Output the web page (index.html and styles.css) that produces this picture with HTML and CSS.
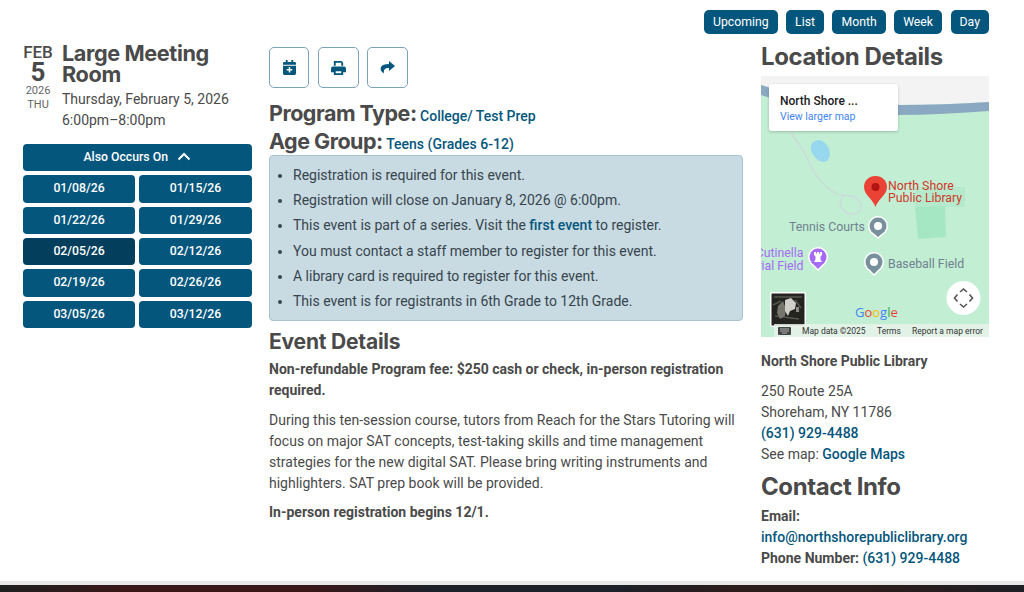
FILE: index.html
```html
<!DOCTYPE html>
<html lang="en">
<head>
<meta charset="utf-8">
<title>Large Meeting Room</title>
<link rel="stylesheet" href="styles.css">
</head>
<body>
<div class="page">
  <nav class="views">
    <a class="btn">Upcoming</a><a class="btn">List</a><a class="btn">Month</a><a class="btn">Week</a><a class="btn">Day</a>
  </nav>
  <div class="columns">
    <aside class="left">
      <div class="event-head">
        <div class="date">
          <div class="mon">FEB</div>
          <div class="day">5</div>
          <div class="yr">2026</div>
          <div class="dow">THU</div>
        </div>
        <div class="title">
          <h1>Large Meeting Room</h1>
          <div class="when">Thursday, February 5, 2026</div>
          <div class="when">6:00pm–8:00pm</div>
        </div>
      </div>
      <div class="occ">
        <a class="occ-btn wide">Also Occurs On
          <svg class="chev" viewBox="0 0 14 9" width="14" height="9"><path d="M1.500 7.500 7 2l5.500 5.500" fill="none" stroke="#fff" stroke-width="2"/></svg>
        </a>
        <a class="occ-btn">01/08/26</a><a class="occ-btn">01/15/26</a>
        <a class="occ-btn">01/22/26</a><a class="occ-btn">01/29/26</a>
        <a class="occ-btn current">02/05/26</a><a class="occ-btn">02/12/26</a>
        <a class="occ-btn">02/19/26</a><a class="occ-btn">02/26/26</a>
        <a class="occ-btn">03/05/26</a><a class="occ-btn">03/12/26</a>
      </div>
    </aside>
    <main class="mid">
      <div class="tools">
        <a class="tool tool-narrow"><svg viewBox="0 0 14 16" width="13" height="15"><path fill="#04567c" d="M3 0h2v2h4V0h2v2h1.500A1.500 1.500 0 0 1 14 3.500V5H0V3.500A1.500 1.500 0 0 1 1.500 2H3zM0 6h14v8.500a1.500 1.500 0 0 1-1.500 1.500h-11A1.500 1.500 0 0 1 0 14.500z"/><path fill="#fff" d="M6.200 7.500h1.600v2.200H10v1.600H7.800v2.200H6.200v-2.200H4V9.700h2.200z"/></svg></a>
        <a class="tool"><svg viewBox="0 0 16 15" width="15" height="14"><path fill="#04567c" d="M3 0h8.200L13 1.800V5h-2V2H5v3H3zM2 6h12a2 2 0 0 1 2 2v4h-3v3H3v-3H0V8a2 2 0 0 1 2-2zm3 5v2h6v-2z"/></svg></a>
        <a class="tool"><svg viewBox="0 0 15 13" width="15" height="13"><path fill="#04567c" d="M9 0l6 5-6 5V7C5.500 7 3.500 8 3.800 12.500 1 10.500 0 8.500 1 6c.9-2 4-3 8-3z"/></svg></a>
      </div>
      <div class="meta"><span class="meta-k">Program Type:</span> <a class="meta-v">College/ Test Prep</a></div>
      <div class="meta"><span class="meta-k">Age Group:</span> <a class="meta-v">Teens (Grades 6-12)</a></div>
      <ul class="notes">
        <li>Registration is required for this event.</li>
        <li>Registration will close on January 8, 2026 @ 6:00pm.</li>
        <li>This event is part of a series. Visit the <a class="link">first event</a> to register.</li>
        <li>You must contact a staff member to register for this event.</li>
        <li>A library card is required to register for this event.</li>
        <li>This event is for registrants in 6th Grade to 12th Grade.</li>
      </ul>
      <h2 class="details-h">Event Details</h2>
      <p class="para"><strong>Non-refundable Program fee: $250 cash or check, in-person registration required.</strong></p>
      <p class="para">During this ten-session course, tutors from Reach for the Stars Tutoring will focus on major SAT concepts, test-taking skills and time management strategies for the new digital SAT. Please bring writing instruments and highlighters. SAT prep book will be provided.</p>
      <p class="para"><strong>In-person registration begins 12/1.</strong></p>
    </main>
    <aside class="right">
      <h2 class="loc-h">Location Details</h2>
      <div class="map">
        <svg class="map-svg" viewBox="0 0 228 261" width="228" height="261">
          <rect width="228" height="261" fill="#c2eed3"/>
          <path d="M0 0h228v26c-30 2-60 3-92 3C90 29 35 22 0 9z" fill="#f3f3f3"/>
          <path d="M0 9C35 22 90 29 136 29c32 0 62-1 92-3v9c-30 2-60 4-92 4C90 39 35 32 0 19z" fill="#8ba8c2"/>
          <path d="M30 57c5 6 9 12 13 19 4 8 6 14 10 20 6 9 13 17 23 22 6 2 10 1 14 2 5 1 8 4 10 8 2 6-4 11-10 10-6-1-11-6-11-11 0-3 2-5 4-7" fill="none" stroke="#cdd8dc" stroke-width="1.300"/>
          <path d="M54 65c5-3 11 1 14 8 2 7 0 12-5 13-6 0-11-6-13-12-1-4 1-8 4-9z" fill="#97d8ee"/>
          <path d="M154 111h50v20h-20v1h-30z" fill="#b4eacb"/>
          <path d="M154 131l30-1 1 31-28 2z" fill="#a6e7c3"/>
          <path d="M114.500 100c8 0 11.500 6 11.500 11 0 8-9 12-11.500 20-2.500-8-11.500-12-11.500-20 0-5 3.500-11 11.500-11z" fill="#ea4335"/>
          <circle cx="114.500" cy="111" r="4" fill="#b31412"/>
          <text class="m-red" x="127" y="114">North Shore</text>
          <text class="m-red" x="127" y="126">Public Library</text>
          <circle cx="117" cy="150" r="10" fill="#fff"/><path d="M109 156l8 7 8-7z" fill="#fff"/>
          <circle cx="117" cy="150" r="8.500" fill="#78909c"/><path d="M110 155l7 6 7-6z" fill="#78909c"/><circle cx="117" cy="150" r="4" fill="#fff"/>
          <text class="m-gray" x="28" y="155">Tennis Courts</text>
          <circle cx="57" cy="181" r="10" fill="#fff"/><path d="M49 187l8 8 8-8z" fill="#fff"/>
          <circle cx="57" cy="181" r="8.500" fill="#a56bf5"/><path d="M50 186l7 7 7-7z" fill="#a56bf5"/>
          <path d="M53 176h2v1.500h1V176h2v1.500h1V176h2v3l-1.500 1.500v3l1.500 2.500h-8l1.500-2.500v-3L53 179z" fill="#fff"/>
          <text class="m-purple" x="42.500" y="181" text-anchor="end">Cutinella</text>
          <text class="m-purple" x="42.500" y="194" text-anchor="end">rial Field</text>
          <circle cx="113" cy="186" r="10" fill="#fff"/><path d="M105 192l8 8 8-8z" fill="#fff"/>
          <circle cx="113" cy="186" r="8.500" fill="#78909c"/><path d="M106 191l7 7 7-7z" fill="#78909c"/><circle cx="113" cy="186" r="4" fill="#fff"/>
          <text class="m-gray" x="127" y="192">Baseball Field</text>
          <rect x="9" y="216" width="36" height="35" rx="2" fill="#fff"/>
          <rect x="10.500" y="217.500" width="33" height="32" fill="#23241f"/>
          <path d="M13 221h28M12 229l8-4M34 224l6 8M14 240l24 3" stroke="#56574f" stroke-width="1.500" fill="none"/>
          <path d="M17 230l5-5 3 8-1 7-5 3-3-6z" fill="#77766c"/>
          <path d="M24 224l6-2 5 5-1 6-5 2-2 5-3-5z" fill="#d0d0c8"/>
          <path d="M35 231h3v5h-3z" fill="#8b8b82"/>
          <text class="m-g" x="94" y="241"><tspan fill="#4285f4">G</tspan><tspan fill="#ea4335">o</tspan><tspan fill="#fbbc05">o</tspan><tspan fill="#4285f4">g</tspan><tspan fill="#34a853">l</tspan><tspan fill="#ea4335">e</tspan></text>
          <circle cx="202.500" cy="222" r="17" fill="#fff"/>
          <path d="M199 216l3.500-3 3.500 3M199 228l3.500 3 3.500-3M196.500 218.500l-3 3.500 3 3.500M208.500 218.500l3 3.500-3 3.500" fill="none" stroke="#555" stroke-width="1.600"/>
          <rect x="13" y="248" width="215" height="13" fill="#e9f2ea" opacity=".85"/>
          <rect x="17" y="251" width="13" height="8" rx="1" fill="#444"/>
          <path d="M19 253h9M19 255h9M21 257h5" stroke="#ddd" stroke-width=".7"/>
          <text class="m-foot" x="41" y="258">Map data ©2025</text>
          <text class="m-foot" x="116" y="258">Terms</text>
          <text class="m-foot" x="151" y="258">Report a map error</text>
        </svg>
        <div class="map-card">
          <div class="card-name">North Shore ...</div>
          <a class="card-link">View larger map</a>
        </div>
      </div>
      <div class="branch">North Shore Public Library</div>
      <div class="line">250 Route 25A</div>
      <div class="line">Shoreham, NY 11786</div>
      <div class="line"><a class="link">(631) 929-4488</a></div>
      <div class="line">See map: <a class="link">Google Maps</a></div>
      <h2 class="contact-h">Contact Info</h2>
      <div class="line"><strong>Email:</strong></div>
      <div class="line"><a class="link">info@northshorepubliclibrary.org</a></div>
      <div class="line"><strong>Phone Number:</strong> <a class="link">(631) 929-4488</a></div>
    </aside>
  </div>
</div>
<footer class="foot"></footer>
</body>
</html>
```
FILE: styles.css
```css
* { box-sizing: border-box; }
html, body { margin: 0; height: 592px; overflow: hidden; background: #fff; }
body { font-family: Roboto, sans-serif; font-size: 14px; color: #4a4a4a; display: flex; flex-direction: column; }
.page { flex: 1; padding: 10px 35px 0 23px; }
.views { display: flex; justify-content: flex-end; gap: 8.500px; }
.btn { background: #04567c; color: #fff; font-size: 12.250px; height: 24px; line-height: 24px; padding: 0 9px; border-radius: 5px; }
.columns { display: flex; margin-top: 8px; }
.left { width: 228.500px; padding-top: 1px; }
.mid { width: 474px; margin-left: 17.500px; padding-top: 5px; }
.right { width: 228px; margin-left: 18px; }
.event-head { display: flex; }
.date { width: 30px; text-align: center; margin-right: 9px; color: #4a4a4a; }
.mon { font-size: 17px; font-weight: 500; line-height: 16px; margin-top: 1px; }
.day { font-size: 26px; font-weight: 700; line-height: 25px; }
.yr, .dow { font-size: 11px; line-height: 14px; color: #666; }
.yr { margin-top: -1px; }
h1, h2 { font-family: "Inter", sans-serif; font-weight: 700; color: #4a4a4a; margin: 0; }
.title { flex: 1; }
h1 { font-size: 21.700px; line-height: 21px; letter-spacing: -.4px; }
.when { line-height: 21px; }
h1 + .when { margin-top: 4px; }
.occ { display: grid; grid-template-columns: 1fr 1fr; grid-auto-rows: 27.330px; gap: 4px 4.300px; margin-top: 13px; }
.occ-btn { background: #04567c; color: #fff; font-size: 12.250px; font-weight: 500; line-height: 27px; text-align: center; border-radius: 4px; }
.occ-btn.wide { grid-column: 1 / 3; }
.occ-btn.current { background: #033f5c; }
.chev { margin-left: 6px; }
.tools { display: flex; gap: 8.500px; }
.tool { display: flex; align-items: center; justify-content: center; width: 41px; height: 41px; border: 1px solid #7ba3ba; border-radius: 5px; }
.tool-narrow { width: 40px; }
.meta { height: 28px; line-height: 28px; white-space: nowrap; }
.tools + .meta { margin-top: 11px; }
.meta-k { font-family: "Inter", sans-serif; font-weight: 700; font-size: 21.500px; letter-spacing: -.5px; color: #4a4a4a; }
.meta-v { color: #04567c; font-weight: 500; font-size: 14px; }
.notes { background: #c8dae2; color: #37454d; border: 1px solid #a9c3d0; border-radius: 4px; margin: 0; padding: 7px 10px 1px 23px; height: 166px; }
.notes li { line-height: 25.200px; }
.link { color: #04567c; font-weight: 500; }
.details-h { font-size: 21px; line-height: 28px; margin-top: 7px; letter-spacing: -.2px; }
.para { margin: 0 0 8.500px; line-height: 21px; }
.details-h + .para { margin-top: 3px; }
.loc-h { font-size: 24px; line-height: 28px; margin-top: 1px; letter-spacing: -.4px; }
.map { position: relative; margin-top: 5px; width: 228px; height: 261px; }
.map-svg { display: block; }
.map-card { position: absolute; left: 8px; top: 8px; width: 129px; height: 47px; background: #fff; border-radius: 2px; padding: 10px 11px; box-shadow: 0 1px 3px rgba(0,0,0,.2); }
.card-name { font-size: 12px; font-weight: 500; color: #202124; line-height: 15px; }
.card-link { font-size: 10.500px; color: #4285f4; line-height: 15px; display: block; }
.m-red { font: 12.300px Roboto, sans-serif; fill: #d1392c; }
.m-gray { font: 12.300px Roboto, sans-serif; fill: #70818f; }
.m-purple { font: 12.300px Roboto, sans-serif; fill: #a56bf5; }
.m-g { font: 500 13px "Open Sans", sans-serif; }
.m-foot { font: 8.500px Roboto, sans-serif; fill: #333; }
.branch { font-weight: 700; margin-top: 14px; line-height: 21px; margin-bottom: 9px; }
.line { line-height: 21px; }
.contact-h { font-size: 24px; line-height: 28px; margin-top: 8px; margin-bottom: 5px; letter-spacing: -.4px; }
.foot { height: 11px; flex: none; border-top: 4px solid #e8e8e8; background: linear-gradient(90deg, #1d1f1f 0%, #3a1719 12%, #3a1719 30%, #1c2028 42%, #1c2028 60%, #2c1c1c 72%, #2c1c1c 85%, #1d1f24 100%); }
```
